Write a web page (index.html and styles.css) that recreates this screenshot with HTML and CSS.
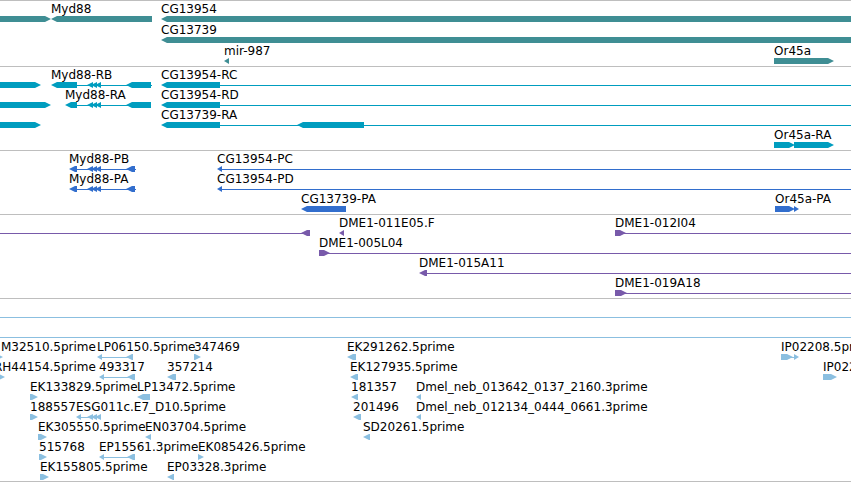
FILE: index.html
```html
<!DOCTYPE html>
<html lang="en">
<head>
<meta charset="UTF-8" />
<title>Genome Browser</title>
<meta name="viewport" content="width=device-width,initial-scale=1" />
<link rel="stylesheet" href="styles.css">
</head>
<body>
<main id="browser">
  <section class="track gene" id="genes" aria-label="Genes"></section>
  <section class="track transcript" id="transcripts" aria-label="Transcripts"></section>
  <section class="track protein" id="proteins" aria-label="Proteins"></section>
  <section class="track bac" id="bacs" aria-label="BACs"></section>
  <section class="track est" id="ests" aria-label="ESTs"></section>
</main>
<script src="tracks.js"></script>
</body>
</html>
```

FILE: styles.css
```css
:root {
  --rule: #bebebe;
  --gene: #3f8e94;
  --transcript: #009dbf;
  --protein: #326ecd;
  --bac: #785aaa;
  --est: #8bbfe0;
}
body {
  margin: 0;
  background: #fff;
  color: #000;
  font-family: "DejaVu Sans", Verdana, sans-serif;
  font-size: 12px;
  line-height: 17px;
}
#browser {
  border-top: 1px solid var(--rule);
  overflow: hidden;
}
.track {
  padding-bottom: 3px;
  border-bottom: 1px solid var(--rule);
}
.gene, .est {
  padding-bottom: 2px;
}
/* glyphs are 6px high and may reach 1px into the next row */
.row {
  position: relative;
  box-sizing: border-box;
  height: 20px;
  padding-top: 15px;
}
.gene .row {
  height: 21px;
}
/* labels sit at the start coordinate of their feature */
.label {
  position: absolute;
  top: 0;
  white-space: nowrap;
}
.glyphs {
  display: block;
  width: 100%;
  height: 6px;
  fill: currentColor;
}
.gene .glyphs { color: var(--gene); }
.transcript .glyphs { color: var(--transcript); }
.protein .glyphs { color: var(--protein); }
.bac .glyphs { color: var(--bac); }
.est .glyphs { color: var(--est); }
```

FILE: tracks.js
```js
// coordinates are offsets from the start of the region
const LEFT = -20;
const RIGHT = 9999;
const HEAD = 6;

// one feature: label, strand, blocks, connector line
function f(label, strand, blocks, line, labelAt) {
  return { label, strand, blocks, line, labelAt };
}

const smallExons = [[87, 93], [91, 97], [95, 101]];

const tracks = {
  genes: [
    [
      f('', '+', [[LEFT, 51]]),
      f('Myd88', '-', [[51, 152]]),
      f('CG13954', '-', [[161, RIGHT]])
    ],
    [f('CG13739', '-', [[161, RIGHT]])],
    [f('mir-987', '-', [[224, 229]]), f('Or45a', '+', [[774, 834]])]
  ],
  transcripts: [
    [
      f('', '+', [[LEFT, 41]]),
      f('Myd88-RB', '-', [[51, 77], ...smallExons, [126, 151]], [56, 152]),
      f('CG13954-RC', '-', [[161, 220]], [166, RIGHT])
    ],
    [
      f('', '+', [[LEFT, 51]]),
      f('Myd88-RA', '-', [[65, 77], ...smallExons, [126, 151]], [70, 151]),
      f('CG13954-RD', '-', [[161, 220]], [166, RIGHT])
    ],
    [
      f('', '+', [[LEFT, 41]]),
      f('CG13739-RA', '-', [[161, 220], [297, 364]], [166, RIGHT])
    ],
    [f('Or45a-RA', '+', [[774, 795], [794, 834]])]
  ],
  proteins: [
    [
      f('Myd88-PB', '-', [[69, 77], ...smallExons, [126, 135]], [74, 136]),
      f('CG13954-PC', '-', [[217, 222]], [222, RIGHT])
    ],
    [
      f('Myd88-PA', '-', [[69, 77], ...smallExons, [126, 135]], [74, 136]),
      f('CG13954-PD', '-', [[217, 222]], [222, RIGHT])
    ],
    [f('CG13739-PA', '-', [[301, 346]]), f('Or45a-PA', '+', [[775, 795], [794, 799]])]
  ],
  bacs: [
    [
      f('', '-', [[301, 310]], [LEFT, 303]),
      f('DME1-011E05.F', '-', [[339, 344]]),
      f('DME1-012I04', '+', [[615, 626]], [624, RIGHT])
    ],
    [f('DME1-005L04', '+', [[319, 330]], [328, RIGHT])],
    [f('DME1-015A11', '-', [[419, 427]], [427, RIGHT])],
    [f('DME1-019A18', '+', [[615, 627]], [624, RIGHT])]
  ],
  ests: [
    [f('', '-', [], [LEFT, RIGHT])],
    [f('', '-', [], [LEFT, RIGHT])],
    [
      f('M32510.5prime', '+', [[-5, 3]], null, 1),
      f('LP06150.5prime', '-', [[97, 102], [126, 133]], [102, 133]),
      f('347469', '+', [[194, 201]]),
      f('EK291262.5prime', '-', [[347, 356]]),
      f('IP02208.5prime', '+', [[781, 793], [794, 799]], [790, 795])
    ],
    [
      f('RH44154.5prime', '+', [[-5, 5]], null, -6),
      f('493317', '-', [[99, 104], [127, 135]], [104, 135]),
      f('357214', '-', [[167, 176]]),
      f('EK127935.5prime', '-', [[350, 358]]),
      f('IP02208.3prime', '+', [[823, 837]])
    ],
    [
      f('EK133829.5prime', '+', [[30, 38]]),
      f('LP13472.5prime', '-', [[137, 150]]),
      f('181357', '-', [[351, 358]]),
      f('Dmel_neb_013642_0137_2160.3prime', '-', [[416, 421]])
    ],
    [
      f('188557', '+', [[30, 38]]),
      f('ESG011c.E7_D10.5prime', '-', [[76, 81], ...smallExons], [81, 101]),
      f('201496', '-', [[353, 361]]),
      f('Dmel_neb_012134_0444_0661.3prime', '-', [[416, 421]])
    ],
    [
      f('EK305550.5prime', '+', [[38, 47]]),
      f('EN03704.5prime', '-', [[145, 151]]),
      f('SD20261.5prime', '-', [[363, 370]])
    ],
    [
      f('515768', '+', [[39, 47]]),
      f('EP15561.3prime', '-', [[99, 104], [127, 135]], [104, 135]),
      f('EK085426.5prime', '+', [[198, 204]])
    ],
    [
      f('EK155805.5prime', '+', [[40, 49]]),
      f('EP03328.3prime', '-', [[167, 174]])
    ]
  ]
};

function svgEl(name, attrs) {
  const el = document.createElementNS('http://www.w3.org/2000/svg', name);
  for (const key in attrs) el.setAttribute(key, attrs[key]);
  return el;
}

// block with a pointed end in the direction of the strand
function blockPoints(start, end, strand) {
  const head = Math.min(HEAD, end - start);
  if (strand === '-') {
    const neck = start + head;
    return `${start},3 ${neck},0 ${end},0 ${end},6 ${neck},6`;
  }
  const neck = end - head;
  return `${start},0 ${neck},0 ${end},3 ${neck},6 ${start},6`;
}

function renderRow(features) {
  const row = document.createElement('div');
  row.className = 'row';
  const svg = svgEl('svg', { class: 'glyphs', 'aria-hidden': 'true' });
  features.forEach(ft => {
    if (ft.line) {
      svg.appendChild(svgEl('rect', { x: ft.line[0], y: 3, width: ft.line[1] - ft.line[0], height: 1 }));
    }
    ft.blocks.forEach(([start, end]) => {
      svg.appendChild(svgEl('polygon', { points: blockPoints(start, end, ft.strand) }));
    });
    if (ft.label) {
      const label = document.createElement('span');
      label.className = 'label';
      label.textContent = ft.label;
      label.style.left = (ft.labelAt ?? ft.blocks[0][0]) + 'px';
      row.appendChild(label);
    }
  });
  row.appendChild(svg);
  return row;
}

for (const id in tracks) {
  const track = document.getElementById(id);
  tracks[id].forEach(features => track.appendChild(renderRow(features)));
}
```
